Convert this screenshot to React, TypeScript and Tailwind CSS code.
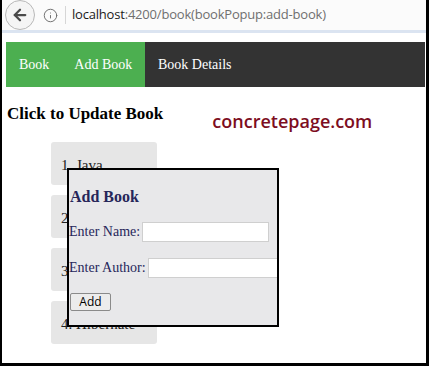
import { ArrowLeft, Info } from 'lucide-react';

const books = ['Java', 'Angular', 'Spring', 'Hibernate'];

export default function App() {
  return (
    <div className="relative h-[366px] w-[429px] overflow-hidden border-b-[3px] border-l-2 border-r-[3px] border-black bg-white font-['Liberation_Serif',serif]">
      {/* browser address bar */}
      <div className="flex h-[33px] items-center border-b-[3px] border-[#dbe4f1] bg-[#fbfbfb] pl-[3px]">
        <div className="flex h-[30px] w-[30px] items-center justify-center rounded-full border border-[#b8b8b8] bg-[#f5f5f5] text-[#4a4a4a]">
          <ArrowLeft size={18} strokeWidth={3} />
        </div>
        <Info size={15} strokeWidth={1.5} className="ml-[8px] text-[#6a6a6a]" />
        <div className="ml-[7px] h-[18px] w-px bg-[#d6d6d6]" />
        <div className="ml-[6px] font-['Open_Sans',sans-serif] text-[13px] tracking-[-0.2px]">
          <span className="text-[#1a1a1a]">localhost</span>
          <span className="text-[#6f6f6f]">:4200/book(bookPopup:add-book)</span>
        </div>
      </div>

      {/* nav */}
      <nav className="ml-[4px] mr-[1px] mt-[9px] flex h-[45px] items-stretch bg-[#333333] text-[14px] text-white">
        <div className="flex w-[139px] items-center bg-[#4caf50]">
          <span className="ml-[13px]">Book</span>
          <span className="ml-[25px]">Add Book</span>
        </div>
        <span className="ml-[13px] self-center">Book Details</span>
      </nav>

      <div className="mt-[17px] flex items-start">
        <h2 className="ml-[5px] text-[17px] leading-[20px] font-bold text-black">Click to Update Book</h2>
        <span className="ml-[49px] mt-[6px] font-['Open_Sans',sans-serif] text-[18px] leading-[22px] font-semibold text-[#7d0d21]">
          concretepage.com
        </span>
      </div>

      <ul className="ml-[49px] mt-[10px] flex w-[106px] flex-col gap-[10px]">
        {books.map((b, i) => (
          <li
            key={b}
            className="flex h-[43px] items-center rounded-[3px] bg-[#e6e6e6] pl-[10px] pt-[4px] text-[15px] text-[#222]"
          >
            {i + 1}. {b}
          </li>
        ))}
      </ul>

      {/* popup */}
      <div className="absolute left-[65px] top-[168px] h-[159px] w-[212px] overflow-hidden border-2 border-black bg-[#e8e8ea] text-[#26265a]">
        <h3 className="ml-[1px] mt-[17px] text-[16px] leading-[20px] font-bold">Add Book</h3>
        <div className="mt-[14px] flex items-center whitespace-nowrap">
          <span className="shrink-0 text-[14px]">Enter Name:</span>
          <input className="ml-[2px] h-[20px] w-[127px] shrink-0 border border-[#cfcfcf] bg-white" />
        </div>
        <div className="mt-[15px] flex items-center whitespace-nowrap">
          <span className="shrink-0 text-[14px]">Enter Author:</span>
          <input className="ml-[2px] h-[20px] w-[130px] shrink-0 border border-[#cfcfcf] bg-white" />
        </div>
        <button className="ml-[1px] mt-[15px] h-[18px] w-[41px] rounded-[2px] border border-[#8a8a8a] bg-[#ececec] font-['Open_Sans',sans-serif] text-[12px] leading-none text-black">
          Add
        </button>
      </div>
    </div>
  );
}
